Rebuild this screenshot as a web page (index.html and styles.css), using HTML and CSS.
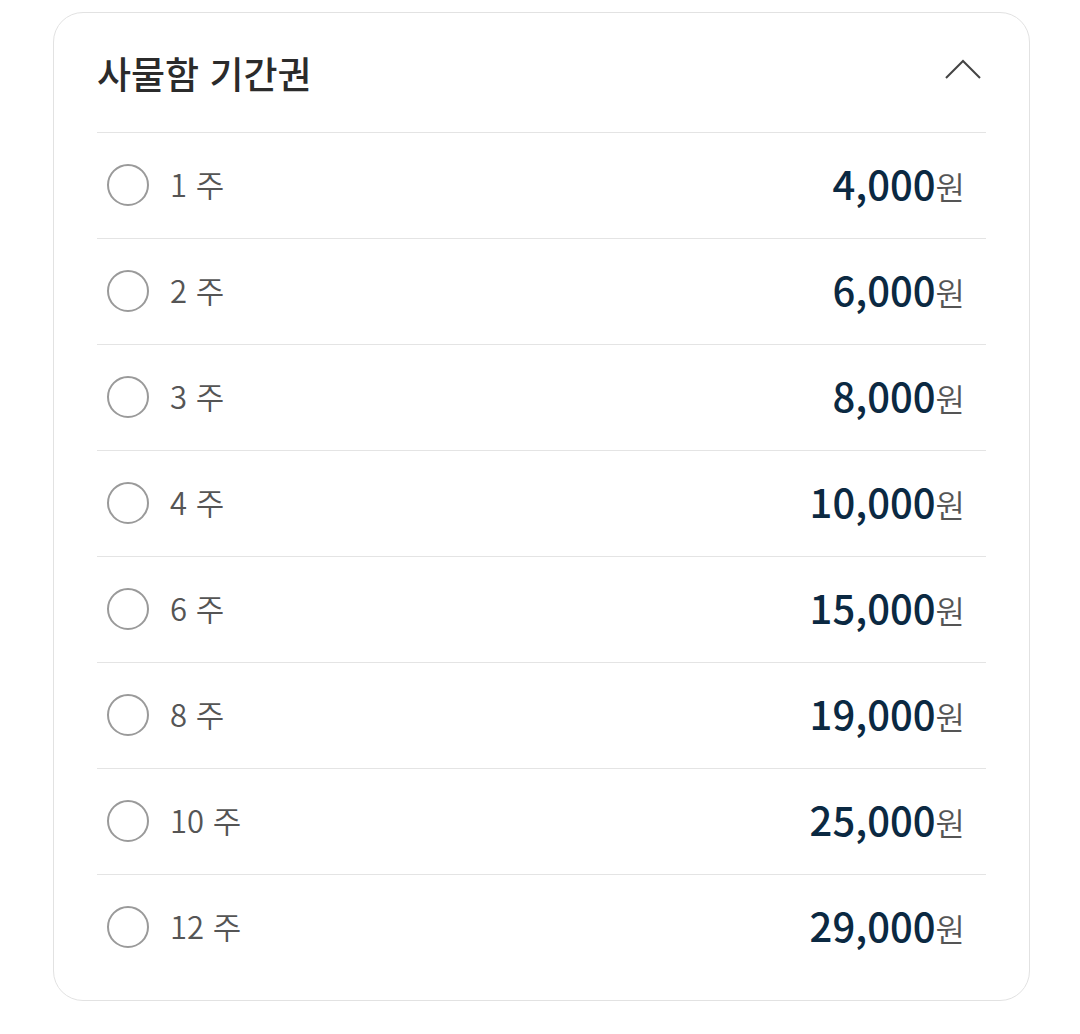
FILE: index.html
```html
<!DOCTYPE html>
<html lang="ko">
<head>
  <meta charset="UTF-8">
  <title>사물함 기간권</title>
  <link rel="stylesheet" href="styles.css">
</head>
<body>

  <section class="locker-card">
    <div class="locker-head">
      <h2>사물함 기간권</h2>
      <svg class="chevron" viewBox="0 0 36 20">
        <polyline points="1,19 18,2 35,19"/>
      </svg>
    </div>

    <ul class="period-list">
      <li class="period-row"><span class="radio"></span><span class="period">1 주</span><span class="price"><b>4,000</b>원</span></li>
      <li class="period-row"><span class="radio"></span><span class="period">2 주</span><span class="price"><b>6,000</b>원</span></li>
      <li class="period-row"><span class="radio"></span><span class="period">3 주</span><span class="price"><b>8,000</b>원</span></li>
      <li class="period-row"><span class="radio"></span><span class="period">4 주</span><span class="price"><b>10,000</b>원</span></li>
      <li class="period-row"><span class="radio"></span><span class="period">6 주</span><span class="price"><b>15,000</b>원</span></li>
      <li class="period-row"><span class="radio"></span><span class="period">8 주</span><span class="price"><b>19,000</b>원</span></li>
      <li class="period-row"><span class="radio"></span><span class="period">10 주</span><span class="price"><b>25,000</b>원</span></li>
      <li class="period-row"><span class="radio"></span><span class="period">12 주</span><span class="price"><b>29,000</b>원</span></li>
    </ul>
  </section>

</body>
</html>
```

FILE: styles.css
```css
body {
  margin: 0;
  background: #fff;
  font-family: "Noto Sans CJK KR", "Noto Sans", sans-serif;
  color: #333;
}

.locker-card {
  width: 977px;
  box-sizing: border-box;
  margin: 12px 0 0 53px;
  border: 1px solid #e2e2e2;
  border-radius: 30px;
  padding: 0 43px 20px;
}

.locker-head {
  height: 119px;
  display: flex; align-items: center;
  justify-content: space-between;
}
.locker-head h2 {
  margin: 0;
  font-size: 37px; font-weight: 500;
  color: #2b2b2b;
}
.chevron {
  width: 36px; height: 20px;
  margin: 0 5px 8px 0;
  fill: none; stroke: #444; stroke-width: 2;
}

.period-list { list-style: none; margin: 0; padding: 0; }
.period-row {
  height: 105px;
  border-top: 1px solid #e4e4e4;
  display: flex; align-items: center;
  padding: 0 21px 0 10px;
}
.radio {
  width: 38px; height: 38px;
  border: 2px solid #9a9a9a;
  border-radius: 50%;
  flex-shrink: 0;
  margin-bottom: 2px;
}
.period {
  margin-left: 21px;
  font-size: 31px; font-weight: 350;
  color: #555;
  flex: 1;
  padding-bottom: 4px;
}
.price {
  font-size: 32px; font-weight: 350;
  color: #555;
  padding-bottom: 6px;
}
.price b {
  font-size: 40px; font-weight: 500;
  color: #0b2942;
}
```
